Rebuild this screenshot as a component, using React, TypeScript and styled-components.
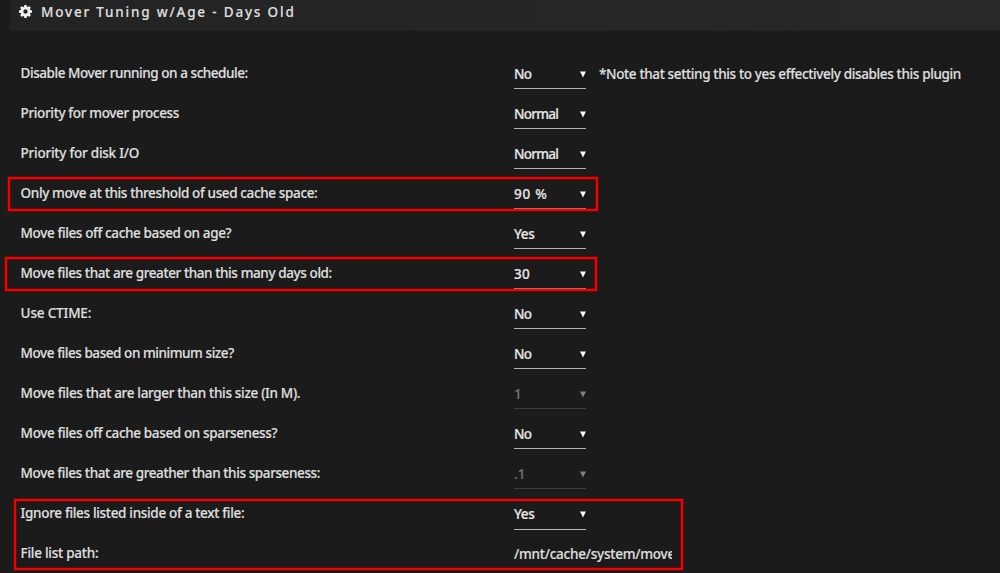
import styled, { createGlobalStyle } from "styled-components";

const GlobalStyle = createGlobalStyle`
    * {
        box-sizing: border-box;
    }
    body {
        margin: 0;
        overflow: hidden;
        background-color: #1b1b1b;
    }
`;

const Page = styled.div`
    position: relative;
    width: 1000px;
    height: 573px;
    overflow: hidden;
    background-color: #1b1b1b;
    color: #dedede;
    font-family: "Noto Sans", sans-serif;
    font-size: 13.5px;
    font-weight: 500;
    line-height: 20px;
    white-space: pre;
    -webkit-text-stroke: 0.2px;
`;

const TitleBar = styled.header`
    display: flex;
    align-items: flex-start;
    gap: 9px;
    height: 31px;
    margin-left: 10px;
    padding: 2px 0 0 9px;
    background: linear-gradient(90deg, #232323, #282828);
    border-bottom: 1px solid #222222;

    & svg {
        width: 13px;
        height: 13px;
        margin-top: 3px;
        fill: #f0f0f0;
    }
`;

const Title = styled.h1`
    margin: 0;
    font-size: 13.5px;
    font-weight: 500;
    line-height: 20px;
    letter-spacing: 1.81px;
`;

const Settings = styled.main`
    padding: 18px 0 0 20.6px;
`;

const Row = styled.div`
    display: grid;
    grid-template-columns: 493.4px 158px;
    height: 40.06px;
`;

const Label = styled.label<{ $tracking: number }>`
    padding-top: 13.7px;
    letter-spacing: ${props => props.$tracking}px;
`;

const Control = styled.div`
    display: flex;
`;

const Select = styled.div<{ $disabled?: boolean }>`
    display: flex;
    flex: none;
    justify-content: space-between;
    width: 72px;
    height: 40px;
    padding-top: 14.7px;
    color: ${props => props.$disabled ? "#747474" : "#e6e6e6"};
    border-bottom: 1px solid ${props => props.$disabled ? "#3c3c3c" : "#b4b4b4"};

    & svg {
        width: 6px;
        height: 7px;
        margin-top: 7px;
        fill: ${props => props.$disabled ? "#808080" : "#f6f6f6"};
    }
`;

const Value = styled.span<{ $tracking: number }>`
    letter-spacing: ${props => props.$tracking}px;
`;

const Note = styled.span`
    padding: 14.7px 0 0 13px;
    letter-spacing: -0.36px;
`;

const PathField = styled.div`
    width: 158px;
    padding-top: 14.5px;
    overflow: hidden;
    letter-spacing: -0.23px;
`;

// red frames drawn over the form
const Highlight = styled.div<{ $x: number, $y: number, $w: number, $h: number }>`
    position: absolute;
    left: ${props => props.$x}px;
    top: ${props => props.$y}px;
    width: ${props => props.$w}px;
    height: ${props => props.$h}px;
    border: 2px solid #f40000;
    box-shadow: 0 0 0 1px rgba(170, 0, 0, 0.4), inset 0 0 0 1px rgba(170, 0, 0, 0.4);
`;

type Setting = {
    label: string,
    tracking: number,
    value?: string,
    valueTracking?: number,
    disabled?: boolean,
    note?: string,
    path?: string
};

const settings: Setting[] = [
    { label: "Disable Mover running on a schedule:", tracking: -0.45, value: "No", valueTracking: -0.8, note: "*Note that setting this to yes effectively disables this plugin" },
    { label: "Priority for mover process", tracking: -0.36, value: "Normal", valueTracking: -0.75 },
    { label: "Priority for disk I/O", tracking: -0.24, value: "Normal", valueTracking: -0.75 },
    { label: "Only move at this threshold of used cache space:", tracking: -0.37, value: "90 %", valueTracking: 0.8 },
    { label: "Move files off cache based on age?", tracking: -0.37, value: "Yes", valueTracking: -0.4 },
    { label: "Move files that are greater than this many days old:", tracking: -0.4, value: "30", valueTracking: 0.3 },
    { label: "Use CTIME:", tracking: -0.17, value: "No", valueTracking: -0.8 },
    { label: "Move files based on minimum size?", tracking: -0.44, value: "No", valueTracking: -0.8 },
    { label: "Move files that are larger than this size (In M).", tracking: -0.32, value: "1", disabled: true },
    { label: "Move files off cache based on sparseness?", tracking: -0.36, value: "No", valueTracking: -0.8 },
    { label: "Move files that are greather than this sparseness:", tracking: -0.4, value: ".1", disabled: true },
    { label: "Ignore files listed inside of a text file:", tracking: -0.32, value: "Yes", valueTracking: -0.4 },
    { label: "File list path:", tracking: -0.26, path: "/mnt/cache/system/move" },
];

function CogIcon() {
    return (
        <svg viewBox="0 0 1536 1536">
            <path d="M1024 768q0-106-75-181t-181-75-181 75-75 181 75 181 181 75 181-75 75-181zM1536 659v222q0 12-8 23t-20 13l-185 28q-19 54-39 91 35 50 107 138 10 12 10 25t-9 23q-27 37-99 108t-94 71q-12 0-26-9l-138-108q-44 23-91 38-16 136-29 186-7 28-36 28H657q-14 0-24.500-8.500T621 1506l-28-184q-49-16-90-37l-141 107q-10 9-25 9-14 0-25-11-126-114-165-168-7-10-7-23 0-12 8-23 15-21 51-66.500t54-70.500q-27-50-41-99L29 913q-13-2-21-12.500T0 877V655q0-12 8-23t19-13l186-28q14-46 39-92-40-57-107-138-10-12-10-24 0-10 9-23 26-36 98.500-107.500T337 135q13 0 26 10l138 107q44-23 91-38 16-136 29-186 7-28 36-28h222q14 0 24.500 8.500T915 30l28 184q49 16 90 37l142-107q9-9 24-9 13 0 25 10 129 119 165 170 7 8 7 22 0 12-8 23-15 21-51 66.500t-54 70.500q26 50 41 98l183 28q13 2 21 12.500t8 23.500z" />
        </svg>
    )
}

function SettingRow(props: { setting: Setting }) {
    const { label, tracking, value, valueTracking, disabled, note, path } = props.setting;
    return (
        <Row>
            <Label $tracking={tracking}>{label}</Label>
            <Control>
                {path && <PathField>{path}</PathField>}
                {value && (
                    <Select $disabled={disabled}>
                        <Value $tracking={valueTracking || 0}>{value}</Value>
                        <svg viewBox="0 0 6 7"><path d="M0 0.5H6L3 6.5Z" /></svg>
                    </Select>
                )}
                {note && <Note>{note}</Note>}
            </Control>
        </Row>
    )
}

export default function App() {
    return (
        <>
            <GlobalStyle />
            <Page>
                <TitleBar>
                    <CogIcon />
                    <Title>Mover Tuning w/Age - Days Old</Title>
                </TitleBar>
                <Settings>
                    {settings.map(setting => <SettingRow key={setting.label} setting={setting} />)}
                </Settings>
                <Highlight $x={8} $y={177} $w={590} $h={34} />
                <Highlight $x={5} $y={257} $w={592} $h={34} />
                <Highlight $x={14} $y={499} $w={669} $h={71} />
            </Page>
        </>
    )
}
